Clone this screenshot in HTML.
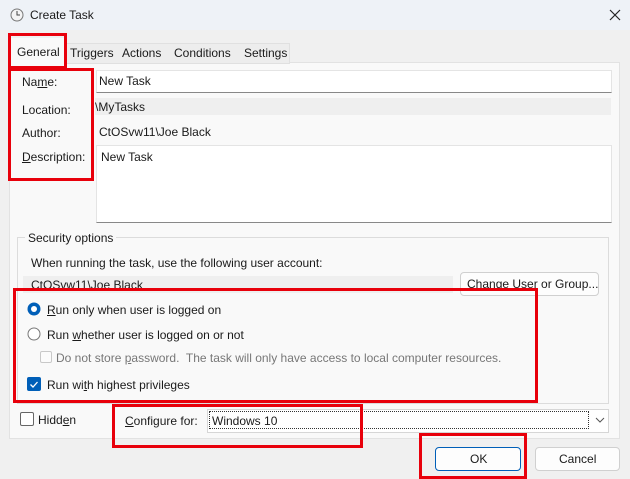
<html><head><style>
body{margin:0;width:630px;height:479px;background:#f0f0f0;font-family:"Liberation Sans",sans-serif;font-size:12px;color:#1a1a1a;position:relative;overflow:hidden}
.a{position:absolute}
.rb{position:absolute;border:3px solid #e8000b;box-sizing:border-box}
.t{position:absolute;white-space:nowrap}
</style></head><body>
<div class="a" style="left:0;top:0;width:630px;height:30px;background:#eef2f7"></div>
<svg class="a" style="left:10px;top:8px" width="14" height="14"><circle cx="7" cy="7" r="6" fill="#f4f4f4" stroke="#777"/><path d="M7 3v4h3" stroke="#444" fill="none"/></svg>
<div class="t" style="left:30px;top:8px">Create Task</div>
<svg class="a" style="left:609px;top:9px" width="12" height="12"><path d="M1 1L11 11M11 1L1 11" stroke="#222" stroke-width="1.2"/></svg>
<div class="a" style="left:9px;top:62px;width:609px;height:375px;background:#f9f9f9;border:1px solid #e2e2e2"></div>
<div class="a" style="left:10px;top:38px;width:55px;height:26px;background:#f9f9f9"></div>
<div class="a" style="left:66px;top:43px;width:222px;height:19px;background:#ededed;border:1px solid #e0e0e0"></div>
<div class="t" style="left:17px;top:45px">General</div>
<div class="t" style="left:70px;top:46px">Triggers</div>
<div class="t" style="left:122px;top:46px">Actions</div>
<div class="t" style="left:174px;top:46px">Conditions</div>
<div class="t" style="left:244px;top:46px">Settings</div>
<div class="a" style="left:96px;top:70px;width:514px;height:21px;background:#fff;border:1px solid #e4e4e4;border-bottom:1px solid #888"></div>
<div class="t" style="left:99px;top:74px">New Task</div>
<div class="a" style="left:95px;top:98px;width:516px;height:17px;background:#efefef"></div>
<div class="t" style="left:95px;top:100px">\MyTasks</div>
<div class="t" style="left:99px;top:125px">CtOSvw11\Joe Black</div>
<div class="a" style="left:96px;top:145px;width:514px;height:76px;background:#fff;border:1px solid #e4e4e4;border-bottom:1px solid #888"></div>
<div class="t" style="left:101px;top:150px">New Task</div>
<div class="t" style="left:22px;top:75px">Na<u>m</u>e:</div>
<div class="t" style="left:22px;top:103px">Location:</div>
<div class="t" style="left:22px;top:126px">Author:</div>
<div class="t" style="left:22px;top:150px"><u>D</u>escription:</div>
<div class="a" style="left:17px;top:237px;width:590px;height:165px;border:1px solid #dcdcdc"></div>
<div class="t" style="left:25px;top:231px;background:#f9f9f9;padding:0 3px">Security options</div>
<div class="t" style="left:31px;top:256px">When running the task, use the following user account:</div>
<div class="a" style="left:23px;top:276px;width:430px;height:17px;background:#efefef"></div>
<div class="t" style="left:31px;top:278px">CtOSvw11\Joe Black</div>
<div class="a" style="left:460px;top:272px;width:137px;height:22px;background:#fdfdfd;border:1px solid #d0d0d0;border-radius:4px"></div>
<div class="t" style="left:467px;top:277px">Change User or Group...</div>
<svg class="a" style="left:27px;top:302px" width="14" height="14"><circle cx="7" cy="7" r="6.5" fill="#005fb8"/><circle cx="7" cy="7" r="3" fill="#fff"/></svg>
<div class="t" style="left:47px;top:303px"><u>R</u>un only when user is logged on</div>
<svg class="a" style="left:27px;top:327px" width="14" height="14"><circle cx="7" cy="7" r="6" fill="#fff" stroke="#777"/></svg>
<div class="t" style="left:47px;top:328px">Run <u>w</u>hether user is logged on or not</div>
<div class="a" style="left:40px;top:351px;width:10px;height:10px;border:1px solid #c8c8c8;border-radius:2px;background:#fbfbfb"></div>
<div class="t" style="left:56px;top:351px;color:#777">Do not store <u>p</u>assword.&nbsp; The task will only have access to local computer resources.</div>
<svg class="a" style="left:27px;top:377px" width="14" height="14"><rect width="14" height="14" rx="2" fill="#005fb8"/><path d="M3.5 7.5l2.5 2.5 4.5-5" stroke="#fff" fill="none" stroke-width="1.3"/></svg>
<div class="t" style="left:47px;top:378px">Run wi<u>t</u>h highest privileges</div>
<div class="a" style="left:20px;top:412px;width:12px;height:12px;border:1px solid #666;border-radius:2px;background:#fff"></div>
<div class="t" style="left:38px;top:413px">Hidd<u>e</u>n</div>
<div class="t" style="left:125px;top:414px"><u>C</u>onfigure for:</div>
<div class="a" style="left:207px;top:409px;width:400px;height:22px;background:#fff;border:1px solid #d6d6d6"></div>
<div class="a" style="left:209px;top:411px;width:380px;height:18px;border:1px dotted #333;box-sizing:border-box"></div>
<div class="t" style="left:212px;top:414px">Windows 10</div>
<svg class="a" style="left:595px;top:416px" width="10" height="8"><path d="M1 2l4 4 4-4" stroke="#555" fill="none"/></svg>
<div class="a" style="left:435px;top:447px;width:84px;height:22px;background:#fdfdfd;border:1px solid #005fb8;border-radius:4px"></div>
<div class="t" style="left:470px;top:452px">OK</div>
<div class="a" style="left:535px;top:447px;width:83px;height:22px;background:#fdfdfd;border:1px solid #d0d0d0;border-radius:4px"></div>
<div class="t" style="left:559px;top:452px">Cancel</div>
<div class="rb" style="left:8px;top:33px;width:59px;height:36px"></div>
<div class="rb" style="left:8px;top:68px;width:86px;height:113px"></div>
<div class="rb" style="left:13px;top:288px;width:525px;height:115px"></div>
<div class="rb" style="left:112px;top:404px;width:251px;height:44px"></div>
<div class="rb" style="left:419px;top:433px;width:108px;height:46px"></div>
</body></html>
